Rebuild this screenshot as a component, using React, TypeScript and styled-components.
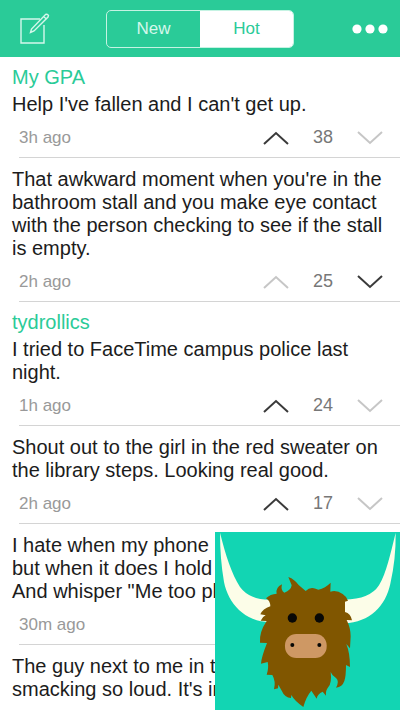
import React from "react";
import styled, { createGlobalStyle } from "styled-components";

const GlobalStyle = createGlobalStyle`
  * { box-sizing: border-box; }
  body {
    margin: 0;
    background: #fff;
    font-family: "Liberation Sans", Arial, Helvetica, sans-serif;
  }
  button { font: inherit; padding: 0; border: 0; background: none; cursor: pointer; }
`;

const Screen = styled.div`
  display: flex;
  flex-direction: column;
  height: 100vh;
  overflow: hidden;
`;

const TopBar = styled.header`
  display: grid;
  grid-template-columns: 1fr auto 1fr;
  align-items: center;
  flex: none;
  height: 57px;
  padding: 0 12px;
  background: #2acb98;
`;

const IconButton = styled.button<{ $end?: boolean }>`
  display: flex;
  justify-self: ${(p) => (p.$end ? "end" : "start")};
  padding-left: 8px;
  color: #fff;
`;

const Segments = styled.div`
  display: flex;
  width: 188px;
  height: 38px;
  border: 1px solid #c5f3e3;
  border-radius: 5px;
  overflow: hidden;
`;

const Segment = styled.button<{ $active?: boolean }>`
  flex: 1;
  font-size: 17px;
  color: ${(p) => (p.$active ? "#2acb98" : "#d5f7eb")};
  background: ${(p) => (p.$active ? "#fff" : "transparent")};
`;

const Feed = styled.main`
  flex: 1;
  min-height: 0;
  overflow-y: auto;
  scrollbar-width: none;
`;

const Post = styled.article`
  padding-top: 10px;
`;

const Author = styled.h2`
  margin: 0 12px 6px;
  font-size: 20px;
  font-weight: 400;
  line-height: 20px;
  color: #2acb98;
`;

const Message = styled.p`
  margin: 0 8px 0 12px;
  font-size: 20px;
  line-height: 23px;
  white-space: pre-line;
  color: #1c1c1c;
`;

const Meta = styled.footer`
  display: flex;
  align-items: center;
  justify-content: space-between;
  height: 42px;
  margin-left: 19px;
  padding: 2px 16px 0 0;
  border-bottom: 1px solid #d4d4d4;
  color: #999;
`;

const Age = styled.time`
  font-size: 17px;
`;

const Votes = styled.div`
  display: grid;
  grid-template-columns: 28px 66px 28px;
  align-items: center;
`;

const Score = styled.span`
  font-size: 18px;
  text-align: center;
  color: #777;
`;

const VoteButton = styled.button<{ $strong: boolean }>`
  display: flex;
  justify-content: center;
  color: ${(p) => (p.$strong ? "#3a3a3a" : "#c6c6c6")};
`;

const Badge = styled.aside`
  position: fixed;
  right: 0;
  bottom: 0;
  display: flex;
`;

type PostData = {
  author?: string;
  text: string;
  age?: string;
  score?: number;
  favours?: "up" | "down";
};

const posts: PostData[] = [
  { author: "My GPA", text: "Help I've fallen and I can't get up.", age: "3h ago", score: 38, favours: "up" },
  {
    text: "That awkward moment when you're in the bathroom stall and you make eye contact with the person checking to see if the stall is empty.",
    age: "2h ago", score: 25, favours: "down",
  },
  { author: "tydrollics", text: "I tried to FaceTime campus police last night.", age: "1h ago", score: 24, favours: "up" },
  { text: "Shout out to the girl in the red sweater on the library steps. Looking real good.", age: "2h ago", score: 17, favours: "up" },
  { text: "I hate when my phone\nbut when it does I hold\nAnd whisper \"Me too ph", age: "30m ago" },
  { text: "The guy next to me in the\nsmacking so loud. It's in" },
];

const Chevron = ({ down }: { down?: boolean }) => (
  <svg width="26" height="14" viewBox="0 0 26 14" fill="none" stroke="currentColor" strokeWidth="2" aria-hidden="true">
    <path d={down ? "M1 1 13 12 25 1" : "M1 13 13 2 25 13"} />
  </svg>
);

const ComposeIcon = () => (
  <svg width="30" height="32" viewBox="0 0 30 32" fill="none" stroke="#d5f7eb" strokeWidth="1.4" aria-hidden="true">
    <path d="M20 6H1V30H24V12" />
    <path d="M10.500 19.500 11.500 16 25.500 1.500Q27.500 0.500 28.500 2.500L28 4 14 18Z" />
    <path d="M23.500 3.500 26.500 6" />
  </svg>
);

const DotsIcon = () => (
  <svg width="36" height="10" viewBox="0 0 36 10" fill="currentColor" aria-hidden="true">
    <circle cx="5" cy="5" r="4.600" />
    <circle cx="18" cy="5" r="4.600" />
    <circle cx="31" cy="5" r="4.600" />
  </svg>
);

const Yak = () => (
  <svg width="185" height="178" viewBox="0 0 555 534" role="img" aria-label="Yak">
    <rect width="555" height="534" fill="#12d5b3" />
    <g fill="#fcfde8">
      <path d="M15 2C32 70 50 125 75 165Q105 205 170 203V270C90 272 40 215 27 150Q15 80 15 2Z" />
      <path d="M542 2C525 70 515 120 492 160Q465 202 388 203V274C465 270 512 222 526 155Q543 80 542 2Z" />
    </g>
    <g transform="translate(105 113)">
      <path
        fill="#805600"
        d="M115 22Q134 29 146 46L167 64Q180 50 197 57L205 60Q226 55 242 39L241 66Q260 60 278 73Q289 80 294 93L285 96V127Q302 131 306 152L290 151Q302 175 302 200L300 236L289 223Q300 250 300 292L288 286Q288 320 283 334Q277 352 258 354Q269 335 258 325Q246 318 242 307Q246 340 235 352Q226 363 228 378L218 366Q202 373 200 387L184 363Q168 382 160 412Q133 393 124 376L123 385Q104 384 96 365L85 345L84 356L72 359Q78 335 67 316L50 315Q57 294 53 277L33 282Q34 263 51 220L30 219Q27 188 50 154L32 153Q36 142 47 137L31 134Q38 118 61 110Q61 94 48 86Q61 73 80 72Q76 54 96 44Q91 63 103 69Q123 62 125 47Z"
      />
      <circle cx="127" cy="145" r="14" fill="#080806" />
      <circle cx="208" cy="145" r="14" fill="#080806" />
      <rect x="105" y="193" width="125" height="72" rx="34" fill="#ce9864" />
      <circle cx="127" cy="226" r="6" fill="#080806" />
      <circle cx="208" cy="226" r="6" fill="#080806" />
    </g>
  </svg>
);

export default function App() {
  return (
    <Screen>
      <GlobalStyle />
      <TopBar>
        <IconButton aria-label="Compose"><ComposeIcon /></IconButton>
        <Segments>
          <Segment aria-pressed="false">New</Segment>
          <Segment $active aria-pressed="true">Hot</Segment>
        </Segments>
        <IconButton $end aria-label="More"><DotsIcon /></IconButton>
      </TopBar>
      <Feed>
        {posts.map((post) => (
          <Post key={post.text}>
            {post.author && <Author>{post.author}</Author>}
            <Message>{post.text}</Message>
            {post.age && (
              <Meta>
                <Age>{post.age}</Age>
                {post.score !== undefined && (
                  <Votes>
                    <VoteButton $strong={post.favours === "up"} aria-label="Upvote"><Chevron /></VoteButton>
                    <Score>{post.score}</Score>
                    <VoteButton $strong={post.favours === "down"} aria-label="Downvote"><Chevron down /></VoteButton>
                  </Votes>
                )}
              </Meta>
            )}
          </Post>
        ))}
      </Feed>
      <Badge><Yak /></Badge>
    </Screen>
  );
}
